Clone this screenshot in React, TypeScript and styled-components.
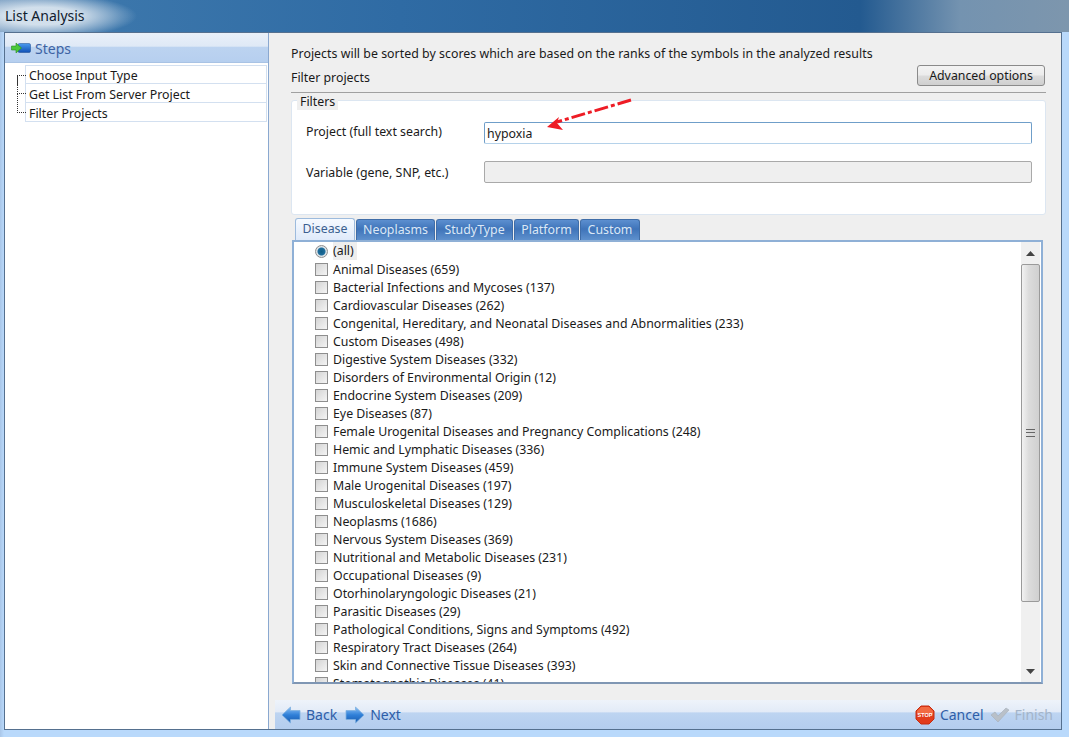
import React from 'react'
import styled, { createGlobalStyle } from 'styled-components'

const GlobalStyle = createGlobalStyle`
  html, body {
    margin: 0;
    padding: 0;
    background: #b9d9fb;
  }
  * {
    box-sizing: border-box;
  }
`

const Window = styled.div`
  width: 1069px;
  height: 737px;
  overflow: hidden;
  display: flex;
  flex-direction: column;
  font-family: 'Noto Sans', sans-serif;
  font-size: 12.35px;
  color: #1a1a1a;
  background: linear-gradient(90deg, #a9c6e8 0, #b9d9fb 4px);
`

const TitleBar = styled.div`
  height: 32px;
  flex: none;
  padding: 7px 0 0 5px;
  font-size: 14px;
  line-height: 18px;
  color: #10202e;
  background:
    radial-gradient(ellipse 95px 22px at 42px 16px, rgba(222, 232, 241, 0.9) 40%, rgba(222, 232, 241, 0) 100%),
    linear-gradient(90deg, #6f96bd 0, #3b76ab 120px, #2f6ba4 400px, #235a90 860px, #7493b0 960px, #7d96ad 1069px);
`

const Frame = styled.div`
  flex: 1;
  margin: 0 7px 7px 4px;
  display: flex;
  border: 1px solid #55708f;
  background: #efefef;
`

const Side = styled.div`
  width: 264px;
  flex: none;
  background: #fff;
  border-right: 1px solid #8aa8d0;
`

const SideHeader = styled.div`
  height: 30px;
  display: flex;
  align-items: center;
  gap: 4px;
  padding: 1px 0 0 6px;
  font-size: 14px;
  color: #3e63a3;
  background: linear-gradient(#e9f0f9 0, #dfe9f6 45%, #bcd3f0 50%, #b6cfef 100%);
  border-bottom: 1px solid #a9c3e4;
`

const Tree = styled.div`
  margin: 2px 1px 0 16px;
  position: relative;
`

const TreeRow = styled.div`
  height: 19px;
  margin-left: 4px;
  padding: 2px 0 0 3px;
  line-height: 18px;
  border: 1px solid #d3e0f0;
  border-top-width: 0;
  position: relative;
  &:first-child {
    border-top-width: 1px;
    padding-top: 1px;
  }
  &::before {
    content: '';
    position: absolute;
    left: -9px;
    top: 9px;
    width: 9px;
    border-top: 1px dotted #333;
  }
  &::after {
    content: '';
    position: absolute;
    left: -9px;
    top: -9px;
    height: 19px;
    border-left: 1px dotted #333;
  }
  &:first-child::after {
    top: 9px;
    height: 10px;
  }
`

const Main = styled.div`
  flex: 1;
  min-width: 0;
  display: flex;
  flex-direction: column;
  position: relative;
`

const Content = styled.div`
  flex: 1;
  padding: 12px 15px 0 22px;
`

const Intro = styled.div`
  line-height: 17px;
  letter-spacing: 0.03px;
`

const SubHeader = styled.div`
  height: 25px;
  margin-top: 3px;
  display: flex;
  align-items: center;
  justify-content: space-between;
`

const Button = styled.button`
  width: 128px;
  height: 21px;
  margin: 0 1px 5px 0;
  padding: 0;
  font: inherit;
  color: inherit;
  border: 1px solid #8a8a8a;
  border-radius: 3px;
  background: linear-gradient(#f3f3f3 0, #ececec 48%, #dcdcdc 52%, #cfcfcf 100%);
`

const Group = styled.div`
  position: relative;
  margin: 2px 0 0 0;
  height: 123px;
  padding-top: 7px;
  border-top: 1px solid #a0a0a0;
`

const GroupLegend = styled.span`
  position: absolute;
  left: 6px;
  top: 0;
  padding: 0 3px;
  line-height: 17px;
  background: #efefef;
`

const GroupBody = styled.div`
  height: 115px;
  padding: 21px 13px 0 14px;
  background: #fff;
  border: 1px solid #dce6f1;
  border-radius: 3px;
`

const Field = styled.div`
  height: 22px;
  margin-bottom: 17px;
  display: flex;
  align-items: center;
`

const FieldLabel = styled.div<{ $raised?: boolean }>`
  width: 178px;
  flex: none;
  padding-bottom: ${({ $raised }) => ($raised ? '4px' : '0')};
`

const TextBox = styled.input<{ $disabled?: boolean }>`
  flex: 1;
  min-width: 0;
  height: 22px;
  padding: 0 2px;
  font: inherit;
  color: inherit;
  outline: none;
  border-radius: 2px;
  border: 1px solid ${({ $disabled }) => ($disabled ? '#a9a9a9' : '#6f9ec9')};
  border-bottom-color: ${({ $disabled }) => ($disabled ? '#a9a9a9' : '#b5d2ea')};
  background: ${({ $disabled }) => ($disabled ? '#efefef' : '#fff')};
`

const Tabs = styled.div`
  margin: 3px 0 0 4px;
  height: 22px;
  display: flex;
  gap: 1px;
  align-items: flex-end;
`

const Tab = styled.div<{ $active?: boolean; $width: number }>`
  width: ${({ $width }) => $width}px;
  height: ${({ $active }) => ($active ? '22px' : '21px')};
  padding-bottom: 2px;
  display: flex;
  align-items: center;
  justify-content: center;
  border-radius: 3px 3px 0 0;
  border: 1px solid ${({ $active }) => ($active ? '#9dbbdd' : '#3f6da8')};
  border-bottom: 0;
  color: ${({ $active }) => ($active ? '#3b5f8f' : '#dce8f6')};
  background: ${({ $active }) =>
    $active
      ? 'linear-gradient(#f6faff, #dfeafa)'
      : 'linear-gradient(#5c8fd0 0, #3f74b9 45%, #5e90cd 100%)'};
`

const ListPanel = styled.div`
  margin-left: 1px;
  width: 751px;
  height: 444px;
  display: flex;
  background: #fff;
  border: 2px solid #8fb0d6;
  border-color: #8fb0d6 #8fb0d6 #7f96b3 #8fb0d6;
  overflow: hidden;
`

const List = styled.div`
  flex: 1;
  min-width: 0;
  padding: 0 0 0 21px;
  overflow: hidden;
`

const ListRow = styled.div`
  height: 18px;
  display: flex;
  align-items: center;
  gap: 6px;
  white-space: nowrap;
`

const Check = styled.span`
  width: 13px;
  height: 13px;
  flex: none;
  margin-right: -1px;
  border: 1px solid #8e8e8e;
  background: linear-gradient(135deg, #d4d4d4, #f4f4f4);
`

const Radio = styled.span`
  width: 13px;
  height: 13px;
  flex: none;
  margin-right: -1px;
  border-radius: 50%;
  border: 1px solid #8e8e8e;
  background: radial-gradient(circle at 50% 50%, #0f5d86 0, #1f6d9c 45%, #dfe6ea 58%, #d4d4d4 100%);
`

const AllLabel = styled.span`
  padding: 0 3px 0 0;
  background: #eeeeee;
  line-height: 18px;
`

const ScrollBar = styled.div`
  width: 19px;
  margin-right: 1px;
  flex: none;
  display: flex;
  flex-direction: column;
  background: #f0f0f0;
`

const ScrollButton = styled.div`
  height: 22px;
  flex: none;
  display: flex;
  align-items: center;
  justify-content: center;
`

const ScrollThumb = styled.div`
  height: 338px;
  flex: none;
  display: flex;
  align-items: center;
  justify-content: center;
  border: 1px solid #9a9a9a;
  border-radius: 2px;
  background: linear-gradient(90deg, #f2f2f2 0, #dcdcdc 40%, #d0d0d0 100%);
`

const ScrollGap = styled.div`
  flex: 1;
`

const Grip = styled.div`
  width: 9px;
  height: 8px;
  border-top: 1px solid #666;
  border-bottom: 1px solid #666;
  position: relative;
  &::after {
    content: '';
    position: absolute;
    left: 0;
    right: 0;
    top: 2px;
    border-top: 1px solid #666;
  }
`

const Footer = styled.div`
  height: 29px;
  margin-left: 6px;
  flex: none;
  display: flex;
  align-items: center;
  padding: 0 0 0 6px;
  font-size: 14px;
  color: #2f5ea8;
  background: linear-gradient(#eef3fa 0, #e3ebf7 40%, #bdd4f1 45%, #b4cdee 100%);
`

const FooterButton = styled.div<{ $disabled?: boolean }>`
  display: flex;
  align-items: center;
  gap: 5px;
  margin-right: 8px;
  color: ${({ $disabled }) => ($disabled ? '#a3b4c9' : '#2f5ea8')};
  &:last-child {
    margin-left: -2px;
  }
`

const FooterSpacer = styled.div`
  flex: 1;
`

const Annotation = styled.svg`
  position: absolute;
  left: 0;
  top: 0;
  pointer-events: none;
`

const diseases = [
  'Animal Diseases (659)',
  'Bacterial Infections and Mycoses (137)',
  'Cardiovascular Diseases (262)',
  'Congenital, Hereditary, and Neonatal Diseases and Abnormalities (233)',
  'Custom Diseases (498)',
  'Digestive System Diseases (332)',
  'Disorders of Environmental Origin (12)',
  'Endocrine System Diseases (209)',
  'Eye Diseases (87)',
  'Female Urogenital Diseases and Pregnancy Complications (248)',
  'Hemic and Lymphatic Diseases (336)',
  'Immune System Diseases (459)',
  'Male Urogenital Diseases (197)',
  'Musculoskeletal Diseases (129)',
  'Neoplasms (1686)',
  'Nervous System Diseases (369)',
  'Nutritional and Metabolic Diseases (231)',
  'Occupational Diseases (9)',
  'Otorhinolaryngologic Diseases (21)',
  'Parasitic Diseases (29)',
  'Pathological Conditions, Signs and Symptoms (492)',
  'Respiratory Tract Diseases (264)',
  'Skin and Connective Tissue Diseases (393)',
  'Stomatognathic Diseases (41)',
]

const tabs = [
  { name: 'Disease', width: 60 },
  { name: 'Neoplasms', width: 79 },
  { name: 'StudyType', width: 77 },
  { name: 'Platform', width: 65 },
  { name: 'Custom', width: 60 },
]

const StepsIcon = () => (
  <svg width="20" height="12" viewBox="0 0 20 12">
    <defs>
      <linearGradient id="stepBlue" x1="0" y1="0" x2="0" y2="1">
        <stop offset="0" stopColor="#4a9bef" />
        <stop offset="1" stopColor="#0f4fb5" />
      </linearGradient>
    </defs>
    <rect x="7" y="1.5" width="12.5" height="9" rx="1.5" fill="url(#stepBlue)" stroke="#1a4a90" strokeWidth="0.5" />
    <path d="M0.5 4 H5 V1 L10.5 6 L5 11 V8 H0.5 Z" fill="#49c83a" stroke="#2a8a20" strokeWidth="0.6" />
  </svg>
)

const ArrowIcon = ({ flip }: { flip?: boolean }) => (
  <svg width="20" height="18" viewBox="0 0 20 18" style={flip ? { transform: 'scaleX(-1)' } : undefined}>
    <defs>
      <linearGradient id="navBlue" x1="0" y1="0" x2="0" y2="1">
        <stop offset="0" stopColor="#8cc2f5" />
        <stop offset="0.5" stopColor="#2f7fd8" />
        <stop offset="1" stopColor="#1a5cae" />
      </linearGradient>
    </defs>
    <path d="M1 9 L9.5 1 V4.5 H19 V13.5 H9.5 V17 Z" fill="url(#navBlue)" stroke="#7fb0e0" strokeWidth="0.8" strokeLinejoin="round" />
  </svg>
)

const StopIcon = () => (
  <svg width="20" height="20" viewBox="0 0 20 20">
    <path d="M6 1 H14 L19 6 V14 L14 19 H6 L1 14 V6 Z" fill="#e23c1c" stroke="#c62c10" strokeLinejoin="round" />
    <path d="M6 2 H14 L18 6 V9 H2 V6 Z" fill="#f26a42" />
    <text x="10" y="12" textAnchor="middle" fontSize="5.5" fontWeight="700" fill="#fff" fontFamily="'Liberation Sans', sans-serif">STOP</text>
  </svg>
)

const CheckIcon = () => (
  <svg width="20" height="16" viewBox="0 0 20 16">
    <path d="M1 8 L5 5 L8 9 L16 1 L19 3 L8 15 Z" fill="#b9c0c8" stroke="#a6aeb8" strokeWidth="0.6" strokeLinejoin="round" />
  </svg>
)

function App() {
  return (
    <>
      <GlobalStyle />
      <Window>
        <TitleBar>List Analysis</TitleBar>
        <Frame>
          <Side>
            <SideHeader>
              <StepsIcon />
              Steps
            </SideHeader>
            <Tree>
              <TreeRow>Choose Input Type</TreeRow>
              <TreeRow>Get List From Server Project</TreeRow>
              <TreeRow>Filter Projects</TreeRow>
            </Tree>
          </Side>
          <Main>
            <Content>
              <Intro>Projects will be sorted by scores which are based on the ranks of the symbols in the analyzed results</Intro>
              <SubHeader>
                Filter projects
                <Button>Advanced options</Button>
              </SubHeader>
              <Group>
                <GroupLegend>Filters</GroupLegend>
                <GroupBody>
                  <Field>
                    <FieldLabel $raised>Project (full text search)</FieldLabel>
                    <TextBox defaultValue="hypoxia" />
                  </Field>
                  <Field>
                    <FieldLabel>Variable (gene, SNP, etc.)</FieldLabel>
                    <TextBox $disabled disabled />
                  </Field>
                </GroupBody>
              </Group>
              <Tabs>
                {tabs.map((tab, i) => (
                  <Tab key={tab.name} $active={i === 0} $width={tab.width}>
                    {tab.name}
                  </Tab>
                ))}
              </Tabs>
              <ListPanel>
                <List>
                  <ListRow>
                    <Radio />
                    <AllLabel>(all)</AllLabel>
                  </ListRow>
                  {diseases.map((name) => (
                    <ListRow key={name}>
                      <Check />
                      {name}
                    </ListRow>
                  ))}
                </List>
                <ScrollBar>
                  <ScrollButton>
                    <svg width="9" height="5" viewBox="0 0 9 5">
                      <path d="M4.5 0 L9 5 H0 Z" fill="#444" />
                    </svg>
                  </ScrollButton>
                  <ScrollThumb>
                    <Grip />
                  </ScrollThumb>
                  <ScrollGap />
                  <ScrollButton>
                    <svg width="9" height="5" viewBox="0 0 9 5">
                      <path d="M0 0 H9 L4.5 5 Z" fill="#444" />
                    </svg>
                  </ScrollButton>
                </ScrollBar>
              </ListPanel>
            </Content>
            <Footer>
              <FooterButton>
                <ArrowIcon />
                Back
              </FooterButton>
              <FooterButton>
                <ArrowIcon flip />
                Next
              </FooterButton>
              <FooterSpacer />
              <FooterButton>
                <StopIcon />
                Cancel
              </FooterButton>
              <FooterButton $disabled>
                <CheckIcon />
                Finish
              </FooterButton>
            </Footer>
            <Annotation width="400" height="120" viewBox="0 0 400 120">
              <path d="M362 67 L288 89" stroke="#ee1c25" strokeWidth="3" strokeDasharray="14 3 4 3" fill="none" />
              <path d="M278 94 L290 84 L288 90 L294 97 Z" fill="#ee1c25" />
            </Annotation>
          </Main>
        </Frame>
      </Window>
    </>
  )
}

export default App
